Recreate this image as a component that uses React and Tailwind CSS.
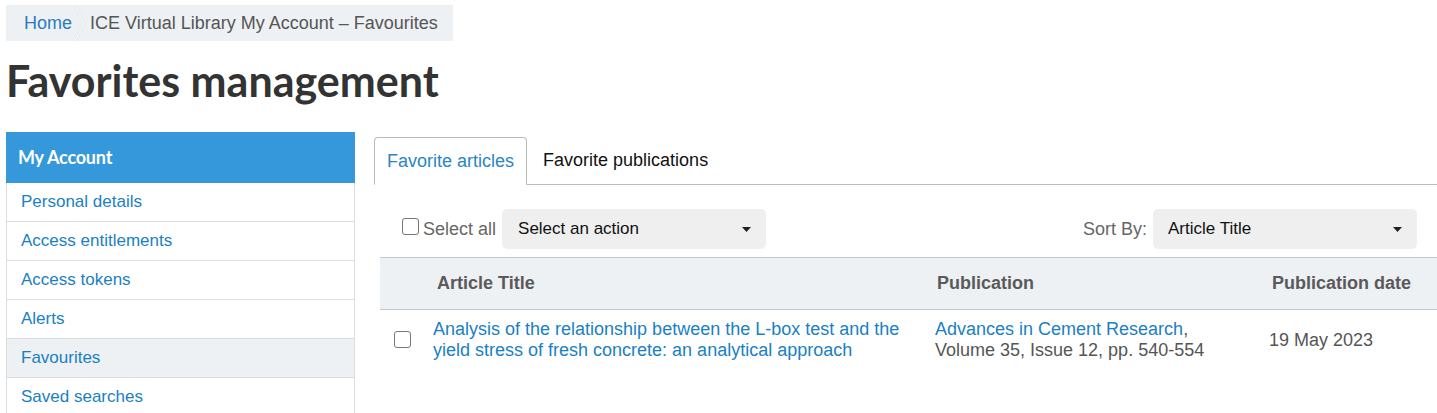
import React from 'react';

const arial = { fontFamily: '"Liberation Sans", Arial, sans-serif' };

const sideItems = ['Personal details', 'Access entitlements', 'Access tokens', 'Alerts', 'Favourites', 'Saved searches'];

function Caret() {
  return (
    <svg width="9" height="5" viewBox="0 0 9 5" className="shrink-0">
      <path d="M0 0h9L4.5 5z" fill="#222" />
    </svg>
  );
}

function Box({ className = '' }) {
  return <span className={`inline-block w-[17px] h-[17px] border border-[#767676] rounded-[3px] bg-white ${className}`} />;
}

export default function App() {
  return (
    <div className="w-[1437px] h-[413px] overflow-hidden bg-white text-[#333]" style={arial}>
      {/* breadcrumb */}
      <div className="pt-[5px] pl-[6px]">
        <div className="flex items-center w-[447px] h-[36px] bg-[#eef1f4] text-[18px]">
          <a className="pl-[18px] pr-[2px] text-[#2a7ac0]">Home</a>
          <svg width="12" height="36" viewBox="0 0 12 36" className="shrink-0">
            <path d="M0 0h2l9 18-9 18H0l9-18z" fill="#fff" stroke="#e2e5e8" strokeWidth="1" />
          </svg>
          <span className="pl-[4px] text-[#555]">ICE Virtual Library My Account – Favourites</span>
        </div>
      </div>

      <h1 className="pl-[6px] mt-[14px] text-[43px] leading-[52px] font-bold text-[#333]" style={{ fontFamily: 'Lato, sans-serif' }}>
        Favorites management
      </h1>

      <div className="flex mt-[25px] pl-[6px]">
        {/* sidebar */}
        <div className="w-[349px] shrink-0">
          <div className="h-[51px] bg-[#3498db] text-white flex items-center pl-[12px] text-[18px] font-bold tracking-[-0.2px]" style={{ fontFamily: 'Lato, sans-serif' }}>
            My Account
          </div>
          <ul className="border-x border-[#ddd]">
            {sideItems.map((s) => (
              <li
                key={s}
                className={`h-[39px] flex items-center pl-[14px] border-b border-[#ddd] text-[17px] text-[#1a7fc4] ${s === 'Favourites' ? 'bg-[#eef1f4]' : 'bg-white'}`}
              >
                {s}
              </li>
            ))}
          </ul>
        </div>

        {/* main */}
        <div className="flex-1 pl-[19px]">
          <div className="flex items-end h-[53px] border-b border-[#bbb]">
            <div className="h-[48px] -mb-px px-[12px] flex items-center border border-[#bbb] border-b-white rounded-t-[4px] bg-white text-[18px] text-[#2a85c6]">
              Favorite articles
            </div>
            <div className="h-[48px] px-[16px] flex items-center text-[18px] text-[#111]">Favorite publications</div>
          </div>

          <div className="flex items-end justify-between h-[72px] pl-[28px] pr-[20px] pb-[8px]">
            <div className="flex items-center">
              <Box className="-mt-[5px]" />
              <span className="ml-[4px] text-[#666] text-[18px]">Select all</span>
              <div className="ml-[6px] w-[264px] h-[40px] rounded-[5px] bg-[#efefef] flex items-center justify-between pl-[16px] pr-[15px] text-[17px] text-[#111]">
                Select an action
                <Caret />
              </div>
            </div>
            <div className="flex items-center">
              <span className="text-[#666] text-[18px] mr-[6px]">Sort By:</span>
              <div className="w-[264px] h-[40px] rounded-[5px] bg-[#efefef] flex items-center justify-between pl-[15px] pr-[15px] text-[17px] text-[#111]">
                Article Title
                <Caret />
              </div>
            </div>
          </div>

          <div className="ml-[6px]">
            <div className="grid grid-cols-[53px_501px_335px_1fr] h-[53px] items-center bg-[#eef1f4] border-y border-[#c8c8c8] text-[18px] font-bold text-[#5a5a5a]">
              <span />
              <span className="pl-[4px]">Article Title</span>
              <span className="pl-[3px]">Publication</span>
              <span className="pl-[3px]">Publication date</span>
            </div>
            <div className="grid grid-cols-[53px_501px_335px_1fr] pt-[9px] text-[18px] leading-[21px]">
              <span className="pl-[14px] pt-[12px]">
                <Box />
              </span>
              <a className="text-[#1a7fc4] pr-[20px]">
                Analysis of the relationship between the L-box test and the yield stress of fresh concrete: an analytical approach
              </a>
              <span className="pl-[1px] text-[#555]">
                <a className="text-[#1a7fc4]">Advances in Cement Research</a>,<br />
                Volume 35, Issue 12, pp. 540-554
              </span>
              <span className="pt-[11px] text-[#555]">19 May 2023</span>
            </div>
          </div>
        </div>
      </div>
    </div>
  );
}
